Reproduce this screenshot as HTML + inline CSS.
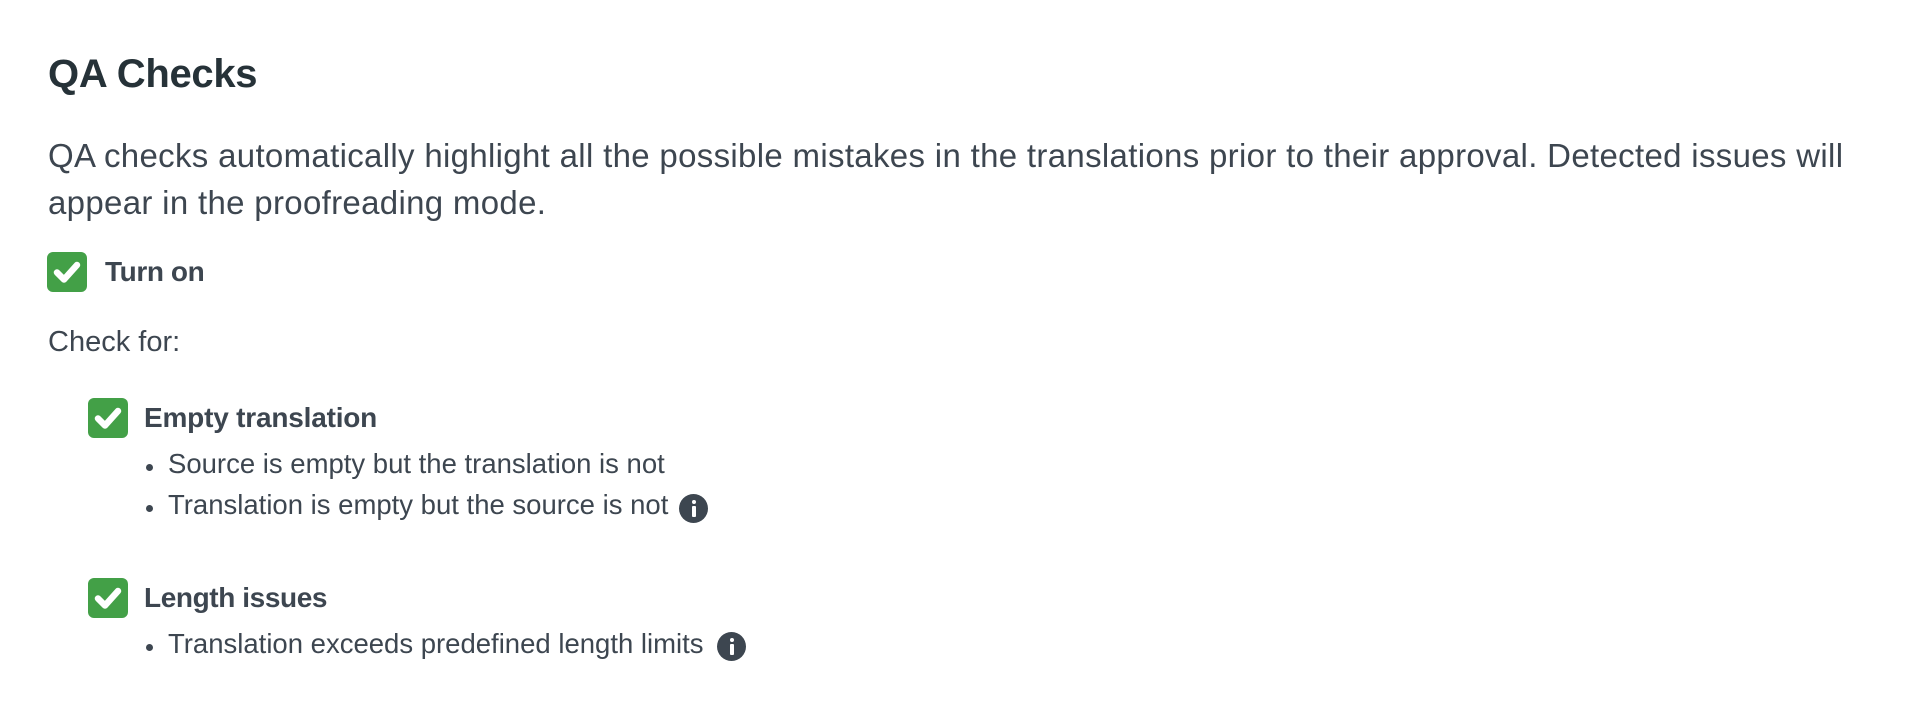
<!DOCTYPE html>
<html><head><meta charset="utf-8"><style>
html,body{margin:0;padding:0;background:#fff;width:1924px;height:716px;overflow:hidden}
body{font-family:"Liberation Sans",sans-serif;color:#3d4650;position:relative}
.a{position:absolute;white-space:nowrap}
.cb{position:absolute;width:40px;height:40px;background:#43a047;border-radius:6px}
.cb svg{position:absolute;left:0;top:0}
.info{position:absolute;width:29px;height:29px;border-radius:50%;background:#3d4650}
.info:before{content:"";position:absolute;left:12.5px;top:6px;width:4px;height:4px;border-radius:50%;background:#fff}
.info:after{content:"";position:absolute;left:12.5px;top:12px;width:4px;height:11px;border-radius:1px;background:#fff}
.dot{position:absolute;width:7px;height:7px;border-radius:50%;background:#3d4650}
</style></head><body>
<div class="a" style="left:48px;top:50px;font-size:40px;font-weight:bold;color:#263238;line-height:48px;letter-spacing:-0.3px">QA Checks</div>
<div class="a" style="left:48px;top:132px;font-size:33px;line-height:47px;letter-spacing:0.32px">QA checks automatically highlight all the possible mistakes in the translations prior to their approval. Detected issues will<br>appear in the proofreading mode.</div>

<div class="cb" style="left:47px;top:252px"><svg width="40" height="40" viewBox="0 0 40 40"><path d="M10 20.5 L17 27.5 L30 13" fill="none" stroke="#fff" stroke-width="6.5" stroke-linecap="round" stroke-linejoin="round"/></svg></div>
<div class="a" style="left:105px;top:254px;font-size:28px;font-weight:bold;line-height:36px;letter-spacing:-0.4px">Turn on</div>

<div class="a" style="left:48px;top:324px;font-size:29px;line-height:36px">Check for:</div>

<div class="cb" style="left:88px;top:398px"><svg width="40" height="40" viewBox="0 0 40 40"><path d="M10 20.5 L17 27.5 L30 13" fill="none" stroke="#fff" stroke-width="6.5" stroke-linecap="round" stroke-linejoin="round"/></svg></div>
<div class="a" style="left:144px;top:400px;font-size:28px;font-weight:bold;line-height:36px;letter-spacing:-0.2px">Empty translation</div>
<div class="dot" style="left:146px;top:464px"></div>
<div class="a" style="left:168px;top:448px;font-size:27.5px;line-height:32px">Source is empty but the translation is not</div>
<div class="dot" style="left:146px;top:505px"></div>
<div class="a" style="left:168px;top:489px;font-size:27.5px;line-height:32px">Translation is empty but the source is not</div>
<div class="info" style="left:679px;top:494px"></div>

<div class="cb" style="left:88px;top:578px"><svg width="40" height="40" viewBox="0 0 40 40"><path d="M10 20.5 L17 27.5 L30 13" fill="none" stroke="#fff" stroke-width="6.5" stroke-linecap="round" stroke-linejoin="round"/></svg></div>
<div class="a" style="left:144px;top:580px;font-size:28px;font-weight:bold;line-height:36px;letter-spacing:-0.4px">Length issues</div>
<div class="dot" style="left:146px;top:644px"></div>
<div class="a" style="left:168px;top:628px;font-size:27.5px;line-height:32px">Translation exceeds predefined length limits</div>
<div class="info" style="left:717px;top:632px"></div>
</body></html>
